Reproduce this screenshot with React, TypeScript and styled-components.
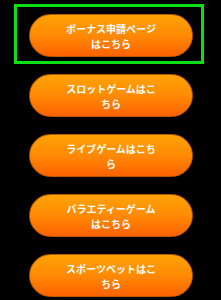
import React from 'react';
import styled, { createGlobalStyle } from 'styled-components';

const GlobalStyle = createGlobalStyle`
  html, body {
    margin: 0;
    padding: 0;
    background: #000;
  }
  body {
    font-family: "Noto Sans CJK JP", "Noto Sans", sans-serif;
  }
`;

const links = [
  'ボーナス申請ページはこちら',
  'スロットゲームはこちら',
  'ライブゲームはこちら',
  'バラエティーゲームはこちら',
  'スポーツベットはこちら',
];

function App() {
  return (
    <>
      <GlobalStyle />
      <List>
        {links.map((label, i) => (
          <Item key={label} $selected={i === 0}>
            <PillButton type="button">{label}</PillButton>
          </Item>
        ))}
      </List>
    </>
  );
}

export default App;

const List = styled.div`
  display: flex;
  flex-direction: column;
  padding-top: 4px;
  width: 221px;
  height: 300px;
  overflow: hidden;
  background: #000;
`;

const Item = styled.div<{ $selected?: boolean }>`
  box-sizing: border-box;
  width: 190px;
  height: 60px;
  margin-left: 14px;
  flex-shrink: 0;
  padding: 10px 11px 0 15px;
  outline: ${(p) => (p.$selected ? '3px solid #0be014' : 'none')};
  outline-offset: -3px;
`;

const PillButton = styled.button`
  box-sizing: border-box;
  display: block;
  width: 164px;
  height: 43px;
  margin: 0;
  padding: 6px 34px;
  border: 1px solid #b85a08;
  border-radius: 22px;
  background: linear-gradient(to bottom, #ffa305 0%, #ff8a05 50%, #ff6200 100%);
  color: #fff;
  font-family: "Noto Sans CJK JP", "Noto Sans", sans-serif;
  font-size: 10px;
  font-weight: 700;
  line-height: 15px;
  text-align: center;
  cursor: pointer;
`;
